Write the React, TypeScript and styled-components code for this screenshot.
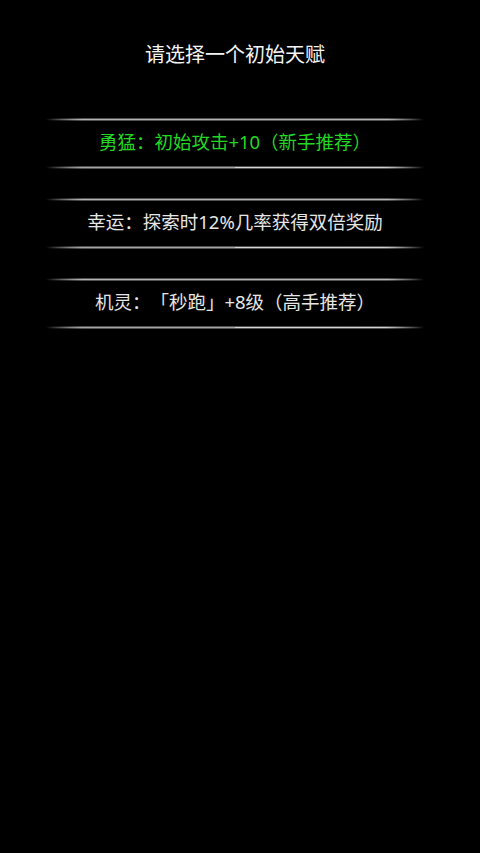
import React from "react";
import styled, { createGlobalStyle } from "styled-components";

const Global = createGlobalStyle`
  html, body {
    margin: 0;
    padding: 0;
    background: #000;
  }
  body {
    font-family: "Noto Sans", "Noto Sans CJK SC", "Liberation Sans", sans-serif;
    text-spacing-trim: space-all;
  }
`;

const Page = styled.div`
  width: 480px;
  height: 853px;
  box-sizing: border-box;
  background: #000;
  padding: 40px 56px 0 46px;
  display: flex;
  flex-direction: column;
`;

const Title = styled.div`
  color: #f4f4f4;
  font-size: 20px;
  line-height: 29px;
  height: 30px;
  text-align: center;
`;

const List = styled.div`
  margin-top: 48px;
  display: flex;
  flex-direction: column;
  gap: 29px;
`;

const Option = styled.div`
  display: flex;
  flex-direction: column;
  cursor: pointer;
`;

const Rule = styled.div<{ $bright?: boolean }>`
  height: 3px;
  position: relative;
  background: linear-gradient(
    to right,
    rgba(90, 90, 90, 0) 0px,
    rgba(90, 90, 90, 0.9) 36px,
    rgba(90, 90, 90, 0.9) calc(100% - 36px),
    rgba(90, 90, 90, 0) 100%
  );
  &::after {
    content: "";
    position: absolute;
    left: 0;
    right: 0;
    top: 1px;
    height: 1px;
    background: ${(p) =>
      p.$bright
        ? `linear-gradient(to right, rgba(190,190,190,0) 0px, rgba(170,170,170,0.95) 36px, rgba(170,170,170,0.95) 50%, rgba(215,215,215,1) 50%, rgba(210,210,210,1) calc(100% - 40px), rgba(200,200,200,0) 100%)`
        : `linear-gradient(to right, rgba(190,190,190,0) 0px, rgba(185,185,185,0.95) 36px, rgba(185,185,185,0.95) calc(100% - 36px), rgba(190,190,190,0) 100%)`};
  }
`;

const Label = styled.div<{ $color: string }>`
  height: 45px;
  box-sizing: border-box;
  padding-bottom: 2px;
  display: flex;
  align-items: center;
  justify-content: center;
  color: ${(p) => p.$color};
  font-size: 18.5px;
  line-height: 1;
  white-space: nowrap;
  text-spacing-trim: space-all;
`;

const options = [
  { text: "勇猛：初始攻击+10（新手推荐）", color: "#22d822" },
  { text: "幸运：探索时12%几率获得双倍奖励", color: "#e6e6e6" },
  { text: "机灵：「秒跑」+8级（高手推荐）", color: "#e6e6e6" },
];

export default function App() {
  return (
    <>
      <Global />
      <Page>
        <Title>请选择一个初始天赋</Title>
        <List>
          {options.map((o) => (
            <Option key={o.text}>
              <Rule />
              <Label $color={o.color}>{o.text}</Label>
              <Rule $bright />
            </Option>
          ))}
        </List>
      </Page>
    </>
  );
}
